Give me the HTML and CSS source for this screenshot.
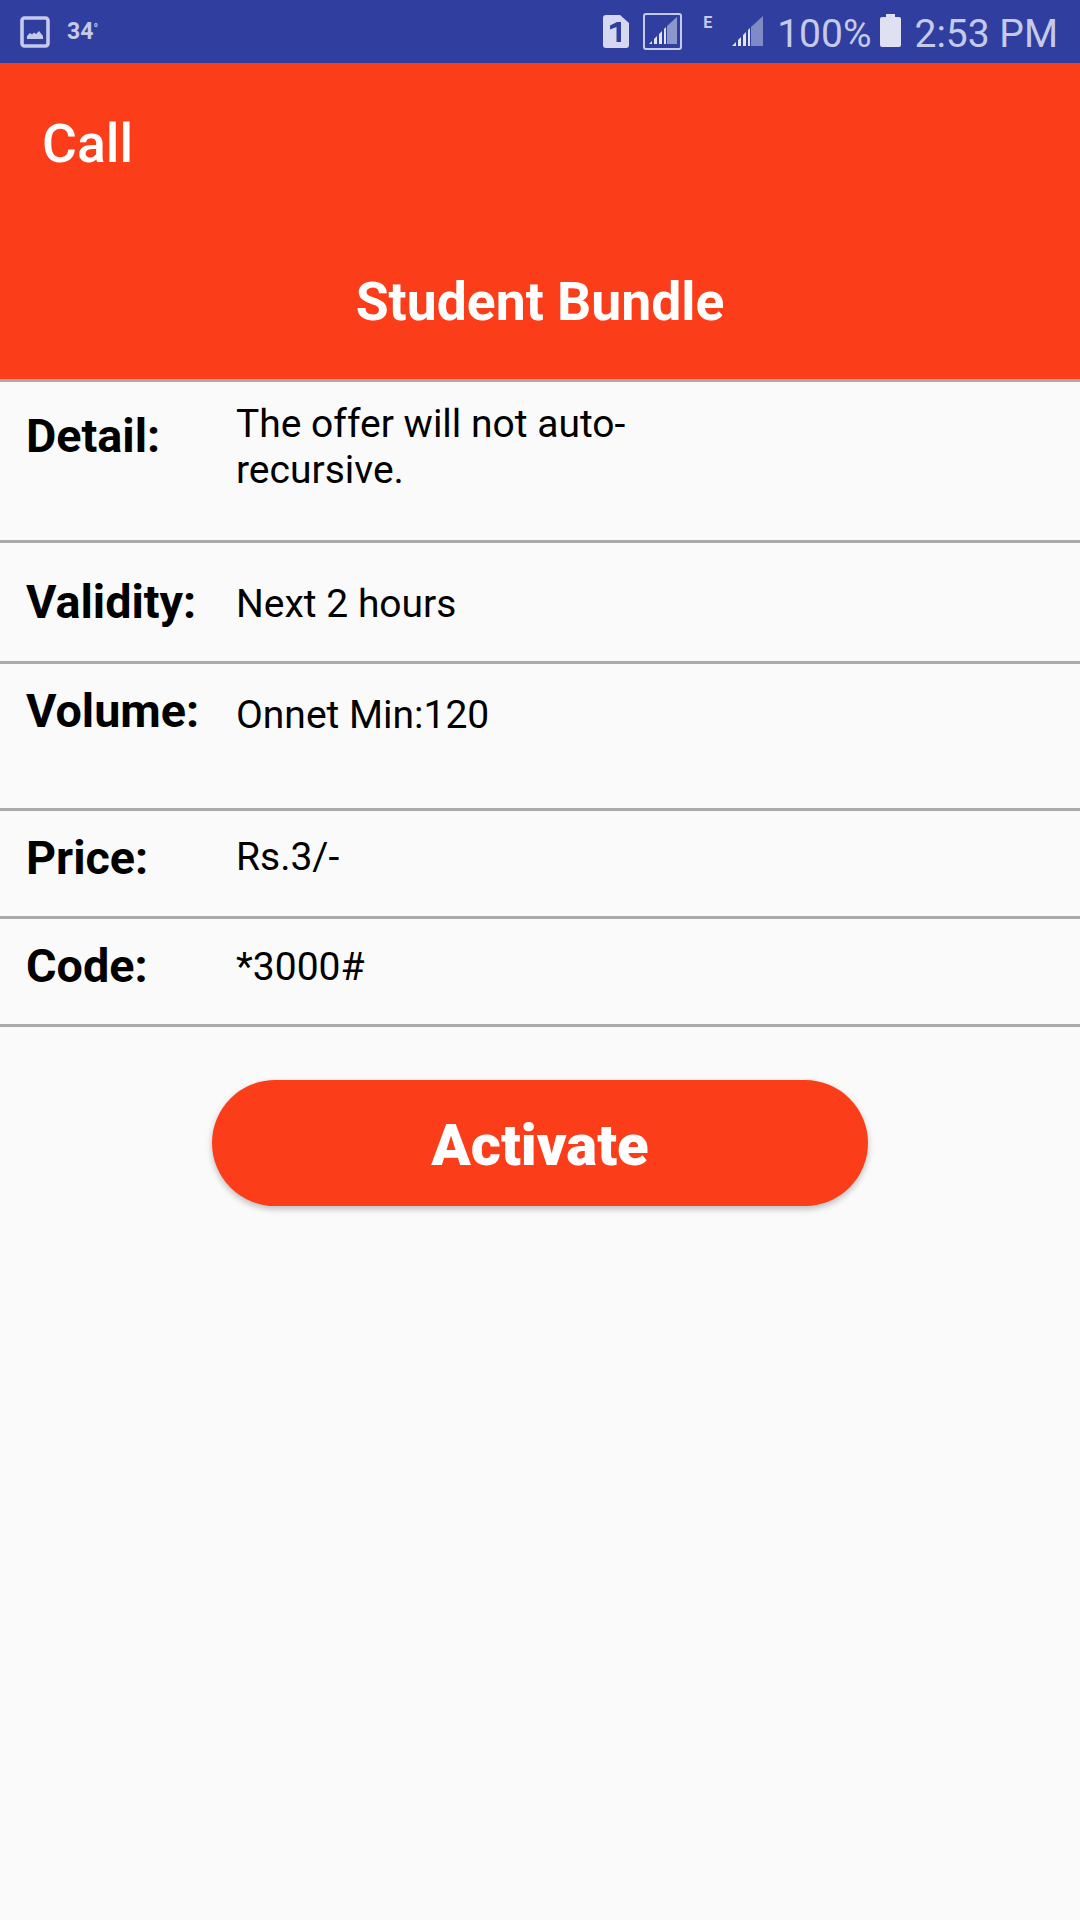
FILE: index.html
```html
<!DOCTYPE html>
<html lang="en">
<head>
<meta charset="utf-8">
<title>Student Bundle</title>
<link rel="stylesheet" href="styles.css">
</head>
<body>
<div class="status">
  <div class="status-left">
    <svg class="i-pic" width="30" height="32" viewBox="0 0 30 32"><rect x="2" y="2" width="26" height="28" rx="2.5" fill="none" stroke="#c5cae9" stroke-width="3.6"/><path d="M7 23 V20 L10 17 L12 18.5 L14 16.5 L16 18 L19 15 L23 20 V23 Z" fill="#c5cae9"/></svg>
    <span class="temp">34<sup class="deg">°</sup></span>
  </div>
  <div class="status-right">
    <svg class="i-sim" width="26" height="33" viewBox="0 0 26 33"><path d="M3 0 H17 L26 8 V30 a3 3 0 0 1 -3 3 H3 a3 3 0 0 1 -3 -3 V3 a3 3 0 0 1 3 -3 Z" fill="#d5d8ee"/><path d="M7 10.5 L14 7 H18 V27 H13.5 V12 L7 14.5 Z" fill="#303f9f"/></svg>
    <svg class="i-sig1" width="39" height="37" viewBox="0 0 39 37"><rect x="1" y="1" width="37" height="35" rx="2" fill="none" stroke="#c5cae9" stroke-width="2"/><path d="M6 31 L9 28 V31 Z M11 31 V26 L14 23 V31 Z M16 31 V21 L19 18 V31 Z M21 31 V16 L23 14 V31 Z" fill="#e3e5f4"/><path d="M24 13 L34 4 V31 H24 Z" fill="#8c97cb"/></svg>
    <span class="net">E</span>
    <svg class="i-sig2" width="32" height="31" viewBox="0 0 32 31"><path d="M0 30 L4 26 V30 Z M6 30 V24 L9 21 V30 Z M11 30 V19 L14 16 V30 Z M16 30 V14 L18 12 V30 Z" fill="#e3e5f4"/><path d="M19 11 L31 0 V30 H19 Z" fill="#7f8bc6"/></svg>
    <span class="pct">100%</span>
    <svg class="i-bat" width="21" height="33" viewBox="0 0 21 33"><path d="M6 0 H15 V3 H19 a2 2 0 0 1 2 2 V31 a2 2 0 0 1 -2 2 H2 a2 2 0 0 1 -2 -2 V5 a2 2 0 0 1 2 -2 H6 Z" fill="#dfe1f2"/></svg>
    <span class="time">2:53 PM</span>
  </div>
</div>
<header class="header">
  <div class="call">Call</div>
  <h1 class="title">Student Bundle</h1>
</header>
<main class="rows">
  <div class="row row-detail"><div class="label">Detail:</div><div class="value value-wrap">The offer will not auto-recursive.</div></div>
  <div class="row row-validity"><div class="label">Validity:</div><div class="value">Next 2 hours</div></div>
  <div class="row row-volume"><div class="label">Volume:</div><div class="value">Onnet Min:120</div></div>
  <div class="row row-price"><div class="label">Price:</div><div class="value">Rs.3/-</div></div>
  <div class="row row-code"><div class="label">Code:</div><div class="value">*3000#</div></div>
</main>
<div class="action"><button class="activate">Activate</button></div>
</body>
</html>
```
FILE: styles.css
```css
* { box-sizing: border-box; }
html, body { margin: 0; padding: 0; }
body { width: 1080px; height: 1920px; background: #fafafa; font-family: Roboto, sans-serif; color: #000; overflow: hidden; }
.status { height: 63px; background: #303f9f; display: flex; justify-content: space-between; align-items: center; padding: 0 22px 0 20px; color: #c5cae9; }
.status-left, .status-right { display: flex; align-items: center; }
.temp { font-size: 23px; font-weight: 700; margin-left: 17px; }
.deg { font-size: 12px; vertical-align: 6px; line-height: 0; }
.i-sim { margin-right: 14px; }
.net { font-size: 16px; font-weight: 700; margin: -18px 0 0 21px; width: 12px; }
.i-sig2 { margin-left: 17px; }
.pct { font-size: 39px; margin-left: 13px; line-height: 1; padding-top: 5px; }
.i-bat { margin-left: 9px; margin-right: 13px; margin-top: -3px; }
.time { font-size: 39px; line-height: 1; padding-top: 5px; }
.header { height: 316px; background: #fb3d1a; color: #fff; display: flex; flex-direction: column; }
.call { font-size: 53.5px; font-weight: 500; padding: 51px 0 0 42px; line-height: 60px; height: 111px; }
.title { font-size: 53.5px; font-weight: 700; margin: 0; text-align: center; line-height: 60px; margin-top: 98px; }
.rows { display: flex; flex-direction: column; }
.row { display: flex; border-top: 3px solid #aaa; }
.row-code { border-bottom: 3px solid #aaa; }
.label { width: 236px; padding-left: 26px; font-size: 46.7px; font-weight: 700; line-height: 54px; flex: none; }
.value { font-size: 39px; line-height: 46px; }
.value-wrap { width: 440px; }
.row-detail { height: 161px; }
.row-detail .label { padding-top: 27px; }
.row-detail .value { padding-top: 19px; }
.row-validity { height: 121px; align-items: center; }
.row-validity .value { padding-top: 4px; }
.row-volume { height: 147px; }
.row-volume .label { padding-top: 20px; }
.row-volume .value { padding-top: 28px; }
.row-price { height: 108px; }
.row-price .label { padding-top: 20px; }
.row-price .value { padding-top: 23px; }
.row-code { height: 111px; }
.row-code .label { padding-top: 20px; }
.row-code .value { padding-top: 25px; }
.action { display: flex; justify-content: center; padding-top: 53px; }
.activate { width: 656px; height: 126px; border: 0; border-radius: 63px; background: #fb3d1a; color: #fff; font-family: Roboto, sans-serif; font-size: 58px; font-weight: 900; box-shadow: 0 3px 6px rgba(0,0,0,.25); padding: 4px 0 0; }
```
